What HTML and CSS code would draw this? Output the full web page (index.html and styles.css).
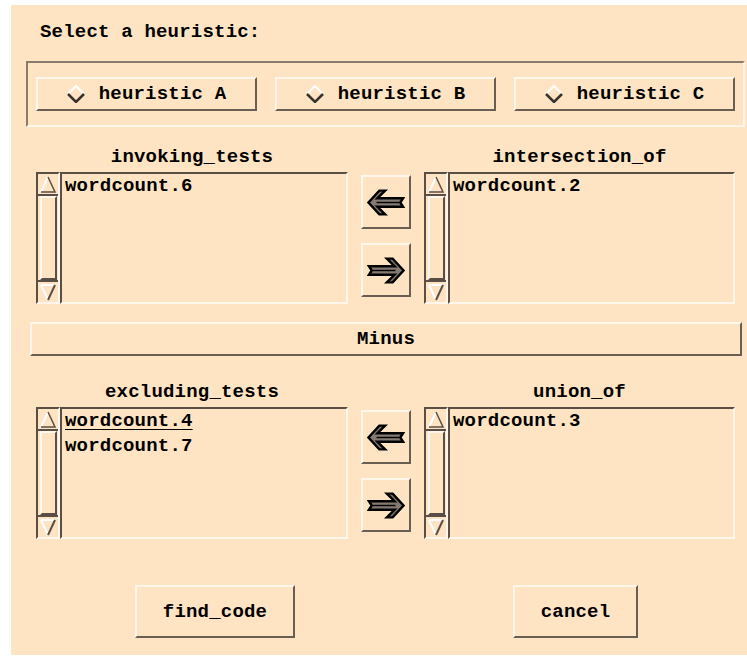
FILE: index.html
```html
<!DOCTYPE html>
<html lang="en">

<head>
    <meta charset="UTF-8">
    <link rel="stylesheet" href="styles.css">
</head>

<body>

    <div class="dialog">
        <div class="title">Select a heuristic:</div>

        <!-- heuristic option menus -->
        <div class="heuristics">
            <div class="btn option">
                <svg class="diamond" viewBox="0 0 18 18"><path d="M1 9 L9 1 L17 9" class="hi" /><path d="M1 9 L9 17 L17 9" class="lo" /></svg>
                <span>heuristic A</span>
            </div>
            <div class="btn option">
                <svg class="diamond" viewBox="0 0 18 18"><path d="M1 9 L9 1 L17 9" class="hi" /><path d="M1 9 L9 17 L17 9" class="lo" /></svg>
                <span>heuristic B</span>
            </div>
            <div class="btn option">
                <svg class="diamond" viewBox="0 0 18 18"><path d="M1 9 L9 1 L17 9" class="hi" /><path d="M1 9 L9 17 L17 9" class="lo" /></svg>
                <span>heuristic C</span>
            </div>
        </div>

        <!-- first pair of lists -->
        <div class="transfer">
            <div class="label">invoking_tests</div>
            <div></div>
            <div class="label">intersection_of</div>

            <div class="listbox">
                <div class="scroll">
                    <svg class="sarrow" viewBox="0 0 20 22"><path d="M10 3 L3 18" class="hi" /><path d="M10 3 L17 18 L3 18" class="lo thin" /><path d="M0 21 L20 21" class="lo" /></svg>
                    <div class="thumb"></div>
                    <svg class="sarrow" viewBox="0 0 20 22"><path d="M0 1 L20 1" class="lo" /><path d="M3 5 L17 5 M3 5 L10 20" class="hi" /><path d="M10 20 L17 5" class="lo" /></svg>
                </div>
                <div class="items">
                    <div>wordcount.6</div>
                </div>
            </div>

            <div class="movers">
                <div class="btn mover">
                    <svg class="arrow" viewBox="0 0 40 28"><path d="M1.5 14 L13 1.5 L19 1.5 L11 9.5 L38 9.5 L35 14 L38 18.5 L11 18.5 L19 26.5 L13 26.5 Z" /><path d="M10 14 L34 14" class="mid" /></svg>
                </div>
                <div class="btn mover">
                    <svg class="arrow flip" viewBox="0 0 40 28"><path d="M1.5 14 L13 1.5 L19 1.5 L11 9.5 L38 9.5 L35 14 L38 18.5 L11 18.5 L19 26.5 L13 26.5 Z" /><path d="M10 14 L34 14" class="mid" /></svg>
                </div>
            </div>

            <div class="listbox">
                <div class="scroll">
                    <svg class="sarrow" viewBox="0 0 20 22"><path d="M10 3 L3 18" class="hi" /><path d="M10 3 L17 18 L3 18" class="lo thin" /><path d="M0 21 L20 21" class="lo" /></svg>
                    <div class="thumb"></div>
                    <svg class="sarrow" viewBox="0 0 20 22"><path d="M0 1 L20 1" class="lo" /><path d="M3 5 L17 5 M3 5 L10 20" class="hi" /><path d="M10 20 L17 5" class="lo" /></svg>
                </div>
                <div class="items">
                    <div>wordcount.2</div>
                </div>
            </div>
        </div>

        <div class="btn bar">Minus</div>

        <!-- second pair of lists -->
        <div class="transfer second">
            <div class="label">excluding_tests</div>
            <div></div>
            <div class="label">union_of</div>

            <div class="listbox">
                <div class="scroll">
                    <svg class="sarrow" viewBox="0 0 20 22"><path d="M10 3 L3 18" class="hi" /><path d="M10 3 L17 18 L3 18" class="lo thin" /><path d="M0 21 L20 21" class="lo" /></svg>
                    <div class="thumb"></div>
                    <svg class="sarrow" viewBox="0 0 20 22"><path d="M0 1 L20 1" class="lo" /><path d="M3 5 L17 5 M3 5 L10 20" class="hi" /><path d="M10 20 L17 5" class="lo" /></svg>
                </div>
                <div class="items">
                    <div class="current">wordcount.4</div>
                    <div>wordcount.7</div>
                </div>
            </div>

            <div class="movers">
                <div class="btn mover">
                    <svg class="arrow" viewBox="0 0 40 28"><path d="M1.5 14 L13 1.5 L19 1.5 L11 9.5 L38 9.5 L35 14 L38 18.5 L11 18.5 L19 26.5 L13 26.5 Z" /><path d="M10 14 L34 14" class="mid" /></svg>
                </div>
                <div class="btn mover">
                    <svg class="arrow flip" viewBox="0 0 40 28"><path d="M1.5 14 L13 1.5 L19 1.5 L11 9.5 L38 9.5 L35 14 L38 18.5 L11 18.5 L19 26.5 L13 26.5 Z" /><path d="M10 14 L34 14" class="mid" /></svg>
                </div>
            </div>

            <div class="listbox">
                <div class="scroll">
                    <svg class="sarrow" viewBox="0 0 20 22"><path d="M10 3 L3 18" class="hi" /><path d="M10 3 L17 18 L3 18" class="lo thin" /><path d="M0 21 L20 21" class="lo" /></svg>
                    <div class="thumb"></div>
                    <svg class="sarrow" viewBox="0 0 20 22"><path d="M0 1 L20 1" class="lo" /><path d="M3 5 L17 5 M3 5 L10 20" class="hi" /><path d="M10 20 L17 5" class="lo" /></svg>
                </div>
                <div class="items">
                    <div>wordcount.3</div>
                </div>
            </div>
        </div>

        <!-- dialog buttons -->
        <div class="actions">
            <div class="btn find">find_code</div>
            <div class="btn cancel">cancel</div>
        </div>
    </div>

</body>

</html>
```

FILE: styles.css
```css
/* general page: white edge round the dialog */
body {
    margin: 0;
    background: #ffffff;
    font-family: "Liberation Mono", "DejaVu Sans Mono", monospace;
    font-weight: bold;
    font-size: 19px;
    letter-spacing: 0.2px;
    color: #000;
}

.dialog {
    margin: 5px 0 0 11px;
    height: 650px;
    box-sizing: border-box;
    padding-top: 16px;
    background: #ffe4c4;
}

.title {
    padding-left: 29px;
    line-height: 22px;
}

/* raised motif-like buttons */
.btn {
    box-sizing: border-box;
    border: 2px solid;
    border-color: #fff6ec #6a5d52 #6a5d52 #fff6ec;
    display: flex;
    align-items: center;
    justify-content: center;
}

/* frame with the option menus */
.heuristics {
    margin: 18px 2px 0 15px;
    border: 2px solid;
    border-color: #8a7b6e #fff6ec #fff6ec #8a7b6e;
    padding: 14px 8px;
    display: flex;
    justify-content: space-between;
}

.option {
    width: 221px;
    height: 34px;
    gap: 14px;
}

.diamond {
    width: 18px;
    height: 18px;
    fill: none;
}

.diamond .hi {
    stroke: #ffffff;
    stroke-width: 2;
}

.diamond .lo {
    stroke: #3a322c;
    stroke-width: 2.5;
}

/* two lists with the move arrows between them */
.transfer {
    margin: 19px 0 0 25px;
    display: grid;
    grid-template-columns: 312px 50px 311px;
    grid-template-rows: 22px 132px;
    column-gap: 13px;
    row-gap: 4px;
}

.transfer.second {
    margin-top: 25px;
}

.label {
    text-align: center;
    line-height: 22px;
}

.listbox {
    display: flex;
}

.scroll {
    width: 24px;
    box-sizing: border-box;
    border: 2px solid;
    border-color: #5a4e45 #fff6ec #fff6ec #5a4e45;
    display: flex;
    flex-direction: column;
}

.sarrow {
    width: 20px;
    height: 22px;
    fill: none;
    stroke-width: 2;
}

.sarrow .hi {
    stroke: #ffffff;
}

.sarrow .lo {
    stroke: #5a4e45;
}

.sarrow .thin {
    stroke-width: 1.5;
}

.thumb {
    flex: 1;
    margin: 0 1px 0 2px;
    border: 2px solid;
    border-color: #fff6ec #5a4e45 #5a4e45 #fff6ec;
}

.items {
    flex: 1;
    border: 2px solid;
    border-color: #5a4e45 #fff6ec #fff6ec #5a4e45;
    padding: 0 3px;
    line-height: 25px;
}

.current {
    text-decoration: underline;
    text-decoration-thickness: 1px;
    text-underline-offset: 3px;
}

.movers {
    padding-top: 3px;
    display: flex;
    flex-direction: column;
    gap: 14px;
}

.mover {
    height: 54px;
}

.arrow {
    width: 38px;
    height: 27px;
}

.arrow path {
    fill: #857a71;
    stroke: #000;
    stroke-width: 2.6;
    stroke-linejoin: miter;
}

.arrow .mid {
    fill: none;
    stroke-width: 1.5;
}

.arrow.flip {
    transform: scaleX(-1);
}

/* the Minus bar */
.bar {
    margin: 18px 5px 0 19px;
    height: 34px;
}

/* bottom buttons */
.actions {
    margin-top: 46px;
    padding-left: 124px;
    display: flex;
    gap: 218px;
}

.actions .btn {
    height: 53px;
}

.find {
    width: 160px;
}

.cancel {
    width: 125px;
}
```
